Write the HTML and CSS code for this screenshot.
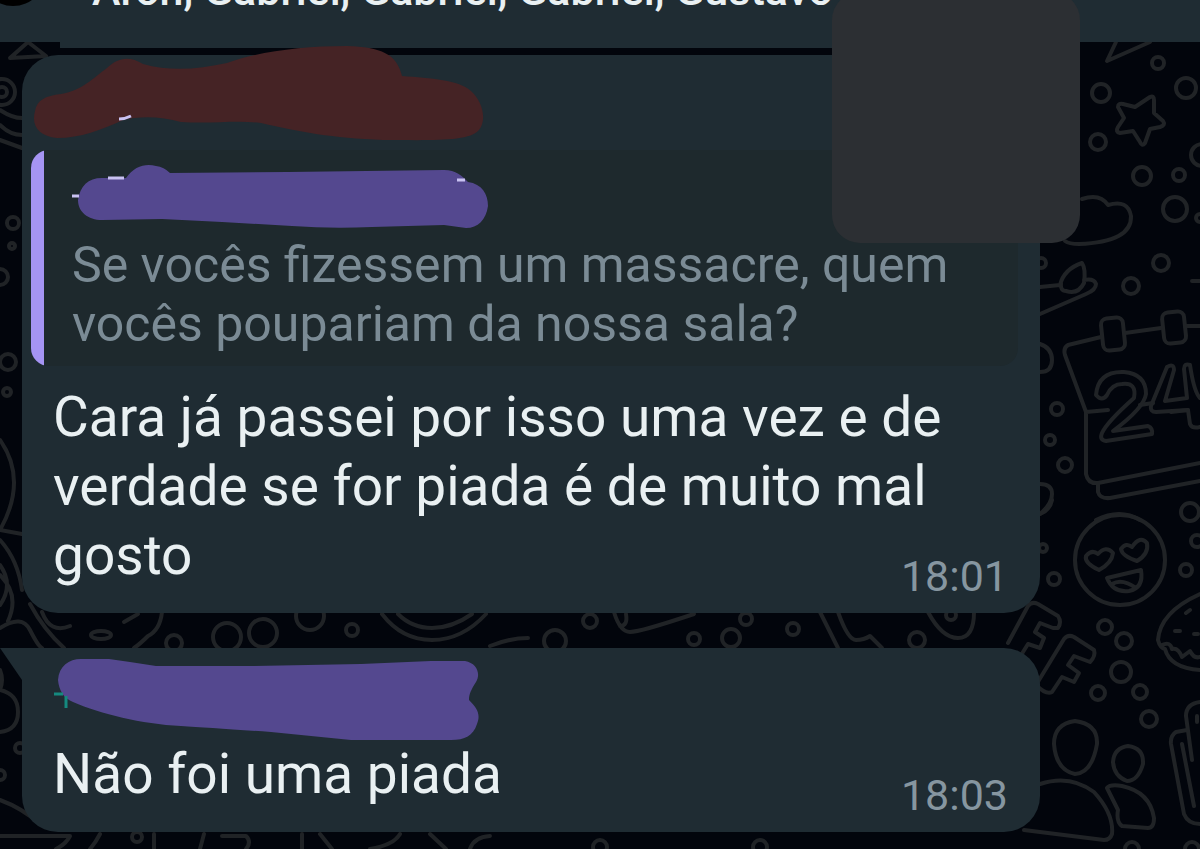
FILE: index.html
```
<!DOCTYPE html>
<html lang="pt-BR">
<head>
  <meta charset="UTF-8" />
  <title>Grupo</title>
  <link rel="stylesheet" href="styles.css">
</head>
<body>
  <!-- doodle wallpaper -->
  <svg class="wallpaper" viewBox="0 0 1200 849" preserveAspectRatio="xMinYMin slice" aria-hidden="true">
    <!-- left edge -->
    <path d="M10 58L28 42L46 56ZM0 110q12 8 22 8M0 125q10 10 22 10M0 140l22 8" />
    <circle cx="2" cy="92" r="13" /><circle cx="2" cy="92" r="5" />
    <circle cx="13" cy="223" r="6" /><circle cx="12" cy="246" r="3" />
    <circle cx="0" cy="277" r="8" /><circle cx="8" cy="362" r="8" /><circle cx="7" cy="392" r="4" />
    <path d="M0 440q28 40 0 90M0 530l22 4M0 540q18 20 22 50M0 565q14 20 0 40M0 575q20 20 8 46" />
    <path d="M0 628q22 -14 30 2t12 18M30 604q14 26 34 44M42 612q8 22 28 14M0 670q4 10 0 20M0 690q18 4 18 22t-18 20M0 800q22 8 40 24" />
    <circle cx="20" cy="748" r="5" /><circle cx="0" cy="775" r="5" />

    <!-- strip between the bubbles -->
    <path d="M124 622l14 -8M162 612q-2 18 -14 24q-8 8 -14 12" />
    <ellipse cx="101" cy="635" rx="10" ry="4" />
    <circle cx="174" cy="643" r="8" /><circle cx="227" cy="637" r="14" /><circle cx="263" cy="633" r="14" />
    <circle cx="310" cy="616" r="14" /><circle cx="352" cy="630" r="6" />
    <path d="M382 614q20 26 50 26t54 -26M398 614q14 14 34 14t40 -14M490 646q20 -8 38 -8" />
    <circle cx="555" cy="641" r="11" /><circle cx="590" cy="621" r="7" />
    <path d="M614 612q6 20 16 20t64 -18M620 626q8 0 6 -12" />
    <circle cx="694" cy="639" r="6" /><circle cx="731" cy="638" r="9" /><circle cx="746" cy="619" r="6" />
    <circle cx="793" cy="629" r="6" /><circle cx="917" cy="640" r="8" />
    <path d="M820 612l18 36M838 612q10 28 18 28t14 -4l12 12M928 612q14 26 30 26t16 -26" />
    <circle cx="951" cy="615" r="5" />

    <!-- bottom edge -->
    <path d="M0 836h70q-4 8 -14 13M100 834q-4 8 -10 15M154 834v15M204 834l-4 15M222 836h24q6 6 0 13M302 834v15M320 834l12 15M370 849q24 -4 30 -15M430 834l16 15M470 849q4 -12 20 -13" />
    <circle cx="137" cy="837" r="5" /><circle cx="600" cy="847" r="7" /><circle cx="760" cy="847" r="7" />

    <!-- top right: star, dots, cloud -->
    <path d="M1116 42L1107 61L1150 42" />
    <circle cx="1158" cy="63" r="6" /><circle cx="1101" cy="93" r="9" /><circle cx="1186" cy="88" r="10" />
    <circle cx="1098" cy="142" r="8" /><circle cx="1142" cy="176" r="9" /><circle cx="1179" cy="175" r="6" />
    <circle cx="1175" cy="209" r="12" /><circle cx="1202" cy="155" r="11" /><circle cx="1200" cy="218" r="4" />
    <path d="M1150 97Q1154 95 1154 100L1154 113L1163 121Q1166 125 1160 127L1150 129L1145 143Q1142 147 1140 142L1133 131L1120 133Q1115 132 1118 127L1124 118L1118 107Q1118 103 1123 104L1135 107Z" />
    <path d="M1082 199q18 -6 26 6q20 -6 23 11q1 26 -52 28q-10 0 -14 -3" />

    <!-- pencil / leaf -->
    <path d="M1040 287l20 -2q4 -16 22 -22q4 6 2 20q-6 12 -18 8q-6 0 -5 -8M1084 280q10 -2 12 4q0 6 -10 10L1040 314" />
    <circle cx="1161" cy="263" r="8" /><circle cx="1131" cy="286" r="8" /><circle cx="1041" cy="263" r="5" />
    <path d="M1192 281h8M1040 344q12 4 12 16t-12 12" />

    <!-- calendar -->
    <path d="M1101 337L1068 345Q1063 348 1065 355L1086 412V474Q1088 484 1098 483L1200 463M1125 333L1161 328M1185 326H1200M1086 412L1108 410M1140 405L1153 403M1171 412L1188 410M1098 485V492Q1100 499 1110 498L1200 481" />
    <rect x="1102" y="318" width="22" height="32" rx="6" transform="rotate(-6 1113 334)" />
    <rect x="1163" y="312" width="22" height="31" rx="6" transform="rotate(-6 1174 327)" />
    <path d="M1096 395Q1098 371 1124 372Q1146 374 1146 394Q1144 408 1113 431L1148 426Q1153 428 1152 434L1106 441Q1099 440 1102 433Q1107 422 1134 398Q1137 382 1122 384Q1112 384 1107 395Q1102 402 1096 395Z" />
    <path d="M1167 367Q1174 363 1174 370L1165 401L1187 398L1184 369Q1184 363 1190 365Q1194 392 1200 398M1167 367L1151 406Q1150 412 1156 412L1188 410L1190 424Q1192 429 1200 427" />
    <circle cx="1057" cy="409" r="6" /><circle cx="1050" cy="440" r="5" /><circle cx="1065" cy="465" r="7" />
    <path d="M1040 484q12 0 12 10t-12 20M1096 520q24 -12 44 0" />

    <!-- smiley -->
    <circle cx="1120" cy="560" r="45" />
    <path d="M1099 570Q1084 563 1086 556Q1092 549 1098 554Q1106 545 1113 553Q1112 563 1099 570ZM1137 561Q1122 556 1121 549Q1126 542 1132 547Q1140 535 1147 543Q1149 554 1137 561ZM1107 578L1141 570Q1144 588 1129 591Q1113 593 1107 578ZM1112 584q10 -6 24 4" />
    <circle cx="1190" cy="512" r="9" /><circle cx="1197" cy="541" r="6" /><circle cx="1186" cy="570" r="6" />
    <circle cx="1054" cy="579" r="6" /><circle cx="1043" cy="548" r="4" /><path d="M1040 514q10 -4 12 -14" />

    <!-- OFF letters -->
    <path d="M1008 643L1028 606Q1032 601 1038 604L1058 616Q1062 622 1058 628L1053 628L1040 623L1035 632L1044 638L1040 648L1028 644L1018 660" />
    <path d="M1036 685L1064 639Q1068 634 1074 637L1094 650Q1096 656 1090 662L1074 656L1068 665L1079 673L1074 682L1062 677L1052 692Q1046 695 1036 685Z" />
    <circle cx="1105" cy="627" r="7" /><circle cx="1124" cy="641" r="8" /><circle cx="1121" cy="672" r="10" />
    <circle cx="1098" cy="693" r="7" /><circle cx="1140" cy="692" r="7" /><circle cx="1149" cy="719" r="8" />

    <!-- cookie -->
    <path d="M1200 594Q1160 612 1158 640Q1160 648 1165 649Q1170 668 1200 670M1162 645q8 -4 10 4q6 -2 10 8l8 -6q4 8 10 6M1186 613l4 -3M1175 631h5M1194 634h4" />

    <!-- people -->
    <path d="M1075 721Q1098 724 1097 744Q1092 773 1075 774Q1056 770 1054 744Q1054 724 1075 721ZM1128 746Q1144 748 1143 764Q1138 781 1127 781Q1114 776 1113 762Q1114 748 1128 746ZM1040 784Q1070 774 1094 792Q1114 814 1112 834Q1110 840 1104 840L1024 830M1107 788Q1110 784 1122 786Q1150 792 1154 818Q1154 828 1148 828L1122 826Q1116 822 1118 810Z" />
    <circle cx="1132" cy="849" r="7" /><circle cx="1192" cy="849" r="7" />

    <!-- test tubes -->
    <path d="M1200 702Q1186 704 1186 716L1192 760M1187 730L1176 732Q1170 736 1171 744L1184 814Q1188 824 1200 824M1182 744L1194 806M1197 716v6" />
  </svg>

  <header class="topbar">
    <span class="avatar"></span>
    <p class="members">Aron, Gabriel, Gabriel, Gabriel, Gustavo</p>
  </header>

  <div class="censor"></div>

  <main class="chat">
    <article class="bubble">
      <div class="sender">
        <svg class="scribble raised" viewBox="0 0 460 100" width="460" height="100" aria-hidden="true">
          <path class="red" d="M4 67C6 56 14 52 30 50C52 46 62 34 76 24C86 14 98 11 112 20C140 28 168 25 196 19C226 8 270 2 316 2C350 3 366 10 371 32C400 34 428 36 440 47C452 58 456 76 448 86C438 98 400 96 352 96C300 94 270 88 230 79C206 76 180 80 150 78C130 72 108 72 92 76C70 86 50 94 26 94C8 92 0 82 4 67Z" />
          <path class="speck" d="M88 75q6 0 12 -3" />
        </svg>
      </div>
      <blockquote class="quote">
        <div class="quote-sender">
          <svg class="scribble" viewBox="0 0 420 70" width="420" height="70" aria-hidden="true">
            <path class="purple" d="M6 38C8 24 16 16 30 16H54C62 4 74 1 84 4Q92 5 98 11L216 10L372 8C384 8 390 14 396 20C410 22 416 32 416 44C414 58 406 66 394 66L372 63L300 65Q260 67 220 64L150 60L90 57L30 58C16 58 6 50 6 38Z" />
            <path class="speck" d="M36 16h16M0 34h7M385 18h8" />
          </svg>
        </div>
        <p class="quote-text">Se vocês fizessem um massacre, quem vocês poupariam da nossa sala?</p>
      </blockquote>
      <div class="body">
        <p class="text">Cara já passei por isso uma vez e de verdade se for piada é de muito mal gosto</p>
        <time class="time">18:01</time>
      </div>
    </article>

    <article class="bubble tail">
      <div class="sender">
        <svg class="scribble" viewBox="0 0 460 90" width="460" height="90" aria-hidden="true">
          <path class="purple" d="M27 32C28 18 38 11 50 11L78 11Q100 14 125 18L218 18L330 16L400 13L434 13C446 15 450 26 445 34C440 42 438 46 438 52C446 60 450 66 446 76C442 88 434 92 420 92H320Q280 88 240 84Q180 80 150 78C110 76 70 66 42 54C32 50 28 42 27 32Z" />
          <path class="green" d="M23 46h9M35 48v12" />
        </svg>
      </div>
      <div class="body">
        <p class="text">Não foi uma piada</p>
        <time class="time">18:03</time>
      </div>
    </article>
  </main>
</body>
</html>
```

FILE: styles.css
```
* {
  box-sizing: border-box;
}
body {
  margin: 0;
  min-height: 100vh;
  position: relative;
  overflow: hidden;
  background: #02050c;
  color: #e9f0f2;
  font-family: Roboto, "Liberation Sans", sans-serif;
}
p,
blockquote {
  margin: 0;
}

.wallpaper {
  position: absolute;
  inset: 0;
  width: 100%;
  height: 100%;
  fill: none;
  stroke: #202326;
  stroke-width: 4;
  stroke-linecap: round;
  stroke-linejoin: round;
}

.topbar {
  position: relative;
  display: flex;
  height: 42px;
  padding-left: 92px;
  background: #1f2c33;
}
.topbar::after {
  content: "";
  position: absolute;
  top: 42px;
  left: 60px;
  right: 160px;
  height: 6px;
  background: #1f2c33;
}
.avatar {
  position: absolute;
  left: -20px;
  top: -60px;
  width: 66px;
  height: 66px;
  border-radius: 50%;
  background: #000;
}
.members {
  margin-top: -40px;
  font-size: 43px;
  font-weight: 500;
  line-height: 60px;
  white-space: nowrap;
}

.censor {
  position: absolute;
  z-index: 2;
  top: -8px;
  right: 120px;
  width: 248px;
  height: 251px;
  border-radius: 28px;
  background: #2c2f33;
}

.chat {
  position: relative;
  display: flex;
  flex-direction: column;
  gap: 35px;
  padding: 13px 160px 16px 22px;
}
.bubble {
  position: relative;
  padding: 0 22px 23px 9px;
  border-radius: 36px;
  background: #1f2c33;
}
.tail {
  border-top-left-radius: 0;
}
.tail::before {
  content: "";
  position: absolute;
  top: 0;
  left: -22px;
  width: 22px;
  height: 32px;
  background: #1f2c33;
  clip-path: polygon(0 0, 100% 0, 100% 100%);
}

.sender {
  height: 95px;
}
.tail .sender {
  height: 92px;
}
.scribble {
  display: block;
  overflow: visible;
}
.raised {
  margin-top: -11px;
  position: absolute;
}
.red {
  fill: #452325;
}
.purple {
  fill: #54488f;
}
.speck,
.green {
  fill: none;
  stroke: #c9c2f2;
  stroke-width: 3;
}
.green {
  stroke: #15897f;
}

.quote {
  position: relative;
  overflow: hidden;
  padding: 12px 20px 12px 41px;
  border-radius: 18px;
  background: #1e292d;
}
.quote::before {
  content: "";
  position: absolute;
  top: 0;
  bottom: 0;
  left: 0;
  width: 13px;
  background: #a594f3;
}
.quote-sender {
  height: 74px;
}
.quote-text {
  color: #7b8b95;
  font-size: 50px;
  line-height: 59px;
}

.body {
  display: flex;
  align-items: flex-end;
  justify-content: space-between;
  padding: 17px 0 0 22px;
}
.tail .body {
  padding-top: 0;
}
.text {
  flex: 1;
  margin-right: -60px;
  font-size: 55px;
  line-height: 69px;
}
.time {
  margin: 0 10px -11px 0;
  color: #8696a0;
  font-size: 43px;
  line-height: 50px;
}
```
